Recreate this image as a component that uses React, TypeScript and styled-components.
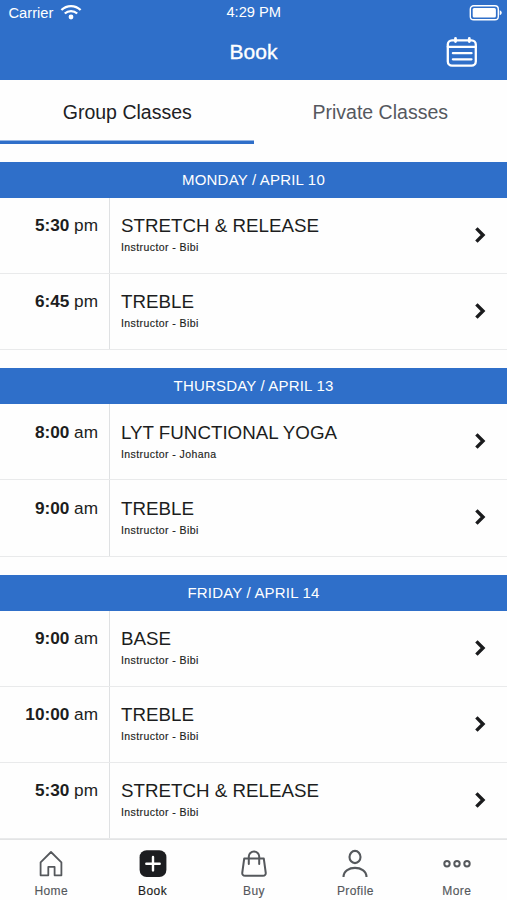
import React from "react";
import styled, { createGlobalStyle } from "styled-components";

const BLUE = "#2f6fc9";

const Global = createGlobalStyle`
  * { box-sizing: border-box; }
  html, body { margin: 0; padding: 0; background: #fff; overflow: hidden; }
  body { font-family: "Liberation Sans", Arial, sans-serif; color: #1c1d20; }
`;

const Screen = styled.div`
  width: 507px;
  height: 900px;
  display: flex;
  flex-direction: column;
  overflow: hidden;
  background: #fefefe;
`;

const Header = styled.header`
  flex: none;
  height: 80.3px;
  background: ${BLUE};
  color: #fff;
`;

const StatusBar = styled.div`
  height: 24px;
  display: grid;
  grid-template-columns: 1fr auto 1fr;
  align-items: center;
  padding: 0 4px 0 8.5px;
  font-size: 14.7px;
  line-height: 24px;
`;

const Carrier = styled.div`
  display: flex;
  align-items: center;
  gap: 7px;
`;

const Clock = styled.div`
  padding-right: 4px;
  height: 25px;
`;

const Battery = styled.div`
  display: flex;
  justify-content: flex-end;
`;

const TitleBar = styled.div`
  display: grid;
  grid-template-columns: 1fr auto 1fr;
  align-items: center;
  height: 56px;
  padding: 0 29px;
`;

const Title = styled.h1`
  grid-column: 2;
  margin: 0;
  font-size: 21px;
  font-weight: 400;
  line-height: 56px;
  -webkit-text-stroke: 0.35px #fff;
`;

const CalendarButton = styled.button`
  justify-self: end;
  display: flex;
  padding: 0;
  border: 0;
  background: none;
`;

const Tabs = styled.div`
  flex: none;
  display: grid;
  grid-template-columns: 1fr 1fr;
  height: 63.6px;
`;

const Tab = styled.div<{ $active?: boolean }>`
  padding-left: ${(p) => (p.$active ? "1px" : "0")};
  text-align: center;
  font-size: 19.5px;
  line-height: 64px;
  height: 63.6px;
  color: ${(p) => (p.$active ? "#202124" : "#55585e")};
  box-shadow: inset 0 -3.5px 0 ${(p) => (p.$active ? BLUE : "transparent")};
`;

const Schedule = styled.main`
  flex: 1;
  min-height: 0;
  overflow: hidden;
`;

const Day = styled.section`
  padding-top: 18px;
`;

const DayTitle = styled.h2`
  margin: 0;
  height: 36px;
  background: ${BLUE};
  color: #fff;
  font-size: 15px;
  font-weight: 400;
  line-height: 36px;
  letter-spacing: 0.18px;
  text-align: center;
`;

const Row = styled.div`
  display: grid;
  grid-template-columns: 110px 1fr 54px;
  height: 76.2px;
  border-bottom: 1px solid #e9eaeb;
`;

const Time = styled.div`
  padding: 17.3px 11px 0 0;
  border-right: 1px solid #dfe1e3;
  text-align: right;
  font-size: 17.2px;
  line-height: 21px;
  white-space: nowrap;
`;

const ClassInfo = styled.div`
  padding: 16.3px 0 0 11px;
`;

const ClassName = styled.div`
  font-size: 18.75px;
  line-height: 23px;
`;

const Instructor = styled.div`
  margin-top: 3px;
  font-size: 10.5px;
  line-height: 14px;
  letter-spacing: 0.42px;
  -webkit-text-stroke: 0.15px #1c1d20;
`;

const Arrow = styled.div`
  display: flex;
  align-items: flex-start;
  padding: 28px 0 0 20.5px;
`;

const Nav = styled.nav`
  flex: none;
  display: grid;
  grid-template-columns: repeat(5, 1fr);
  height: 61px;
  border-top: 1px solid #e3e4e5;
  background: #fefefe;
`;

const NavItem = styled.div<{ $active?: boolean }>`
  display: flex;
  flex-direction: column;
  align-items: center;
  padding: 9px 0 0 1px;
  gap: 4px;
  color: ${(p) => (p.$active ? "#1c1d20" : "#55585c")};
  font-size: 12px;
  line-height: 16px;
  letter-spacing: 0.4px;
  -webkit-text-stroke: 0.15px currentColor;
`;

const WifiIcon = () => (
  <svg width="22" height="17" viewBox="0 0 22 17" fill="none" stroke="#fff" strokeWidth="2.3">
    <path d="M1.4 6C6.8.7 15.2.7 20.6 6" />
    <path d="M4.8 9.5C8.3 6.3 13.7 6.3 17.2 9.5" />
    <circle cx="11" cy="13" r="2.4" fill="#fff" stroke="none" />
  </svg>
);

const BatteryIcon = () => (
  <svg width="34" height="17" viewBox="0 0 34 17" fill="none">
    <rect x="1.3" y="1.8" width="28" height="14" rx="3.4" stroke="#fff" strokeWidth="1.4" />
    <rect x="3.7" y="4.1" width="23.2" height="9.4" rx="1.5" fill="#fff" />
    <path d="M30.7 6.3c2.7.8 2.7 4.2 0 5z" fill="#fff" />
  </svg>
);

const CalendarIcon = () => (
  <svg width="32" height="32" viewBox="0 0 32 32" fill="none" stroke="#fff" strokeWidth="2.3" strokeLinecap="round">
    <rect x="1.8" y="4.3" width="28" height="25.4" rx="4.2" />
    <path d="M1.8 10.8h28M6.9 17.2h18.6M6.9 23.3h18.6" />
    <path d="M9.5 2.4v3.2M23.3 2.4v3.2" strokeWidth="2.8" />
  </svg>
);

const Chevron = () => (
  <svg width="14" height="18" viewBox="0 0 14 18" fill="none" stroke="#1a1b1d" strokeWidth="3.4">
    <path d="M2.4 2.4 9 9l-6.6 6.6" />
  </svg>
);

const HomeIcon = () => (
  <svg width="30" height="30" viewBox="0 0 30 30" fill="none" stroke="currentColor" strokeWidth="1.8" strokeLinejoin="round">
    <path d="M4.6 26.3V13.4L15 3l10.4 10.4v12.9h-6.8v-8.4h-6.3v8.4z" />
  </svg>
);

const BookIcon = () => (
  <svg width="30" height="30" viewBox="0 0 30 30" fill="none">
    <rect x="1.6" y="1.2" width="26.8" height="26.8" rx="7" fill="currentColor" />
    <path d="M15 8v13.4M8.3 14.7h13.4" stroke="#fff" strokeWidth="2.4" strokeLinecap="round" />
  </svg>
);

const BagIcon = () => (
  <svg width="30" height="30" viewBox="0 0 30 30" fill="none" stroke="currentColor" strokeWidth="2" strokeLinecap="round" strokeLinejoin="round">
    <path d="M5.2 9.6h19.6l1.9 13.9c.3 2.1-.8 3.3-2.8 3.3H6.1c-2 0-3.1-1.2-2.8-3.3z" />
    <path d="M9.8 15V7.6a5.2 5.2 0 0 1 10.4 0V15" />
  </svg>
);

const ProfileIcon = () => (
  <svg width="30" height="30" viewBox="0 0 30 30" fill="none" stroke="currentColor" strokeWidth="2.1">
    <ellipse cx="15" cy="8" rx="5.5" ry="6.1" />
    <path d="M3.5 28C3.8 15.8 26.2 15.8 26.5 28" />
  </svg>
);

const MoreIcon = () => (
  <svg width="30" height="30" viewBox="0 0 30 30" fill="none" stroke="currentColor" strokeWidth="2">
    <circle cx="5" cy="14.8" r="2.7" />
    <circle cx="15" cy="14.8" r="2.7" />
    <circle cx="25" cy="14.8" r="2.7" />
  </svg>
);

const days = [
  {
    title: "MONDAY / APRIL 10",
    classes: [
      { time: "5:30", period: "pm", name: "STRETCH & RELEASE", instructor: "Bibi" },
      { time: "6:45", period: "pm", name: "TREBLE", instructor: "Bibi" },
    ],
  },
  {
    title: "THURSDAY / APRIL 13",
    classes: [
      { time: "8:00", period: "am", name: "LYT FUNCTIONAL YOGA", instructor: "Johana" },
      { time: "9:00", period: "am", name: "TREBLE", instructor: "Bibi" },
    ],
  },
  {
    title: "FRIDAY / APRIL 14",
    classes: [
      { time: "9:00", period: "am", name: "BASE", instructor: "Bibi" },
      { time: "10:00", period: "am", name: "TREBLE", instructor: "Bibi" },
      { time: "5:30", period: "pm", name: "STRETCH & RELEASE", instructor: "Bibi" },
    ],
  },
];

const navItems = [
  { label: "Home", Icon: HomeIcon },
  { label: "Book", Icon: BookIcon, active: true },
  { label: "Buy", Icon: BagIcon },
  { label: "Profile", Icon: ProfileIcon },
  { label: "More", Icon: MoreIcon },
];

export default function App() {
  return (
    <Screen>
      <Global />
      <Header>
        <StatusBar>
          <Carrier>
            Carrier
            <WifiIcon />
          </Carrier>
          <Clock>4:29 PM</Clock>
          <Battery>
            <BatteryIcon />
          </Battery>
        </StatusBar>
        <TitleBar>
          <Title>Book</Title>
          <CalendarButton aria-label="Calendar">
            <CalendarIcon />
          </CalendarButton>
        </TitleBar>
      </Header>
      <Tabs>
        <Tab $active>Group Classes</Tab>
        <Tab>Private Classes</Tab>
      </Tabs>
      <Schedule>
        {days.map((day) => (
          <Day key={day.title}>
            <DayTitle>{day.title}</DayTitle>
            {day.classes.map((c) => (
              <Row key={c.time + c.name}>
                <Time>
                  <b>{c.time}</b> {c.period}
                </Time>
                <ClassInfo>
                  <ClassName>{c.name}</ClassName>
                  <Instructor>Instructor - {c.instructor}</Instructor>
                </ClassInfo>
                <Arrow>
                  <Chevron />
                </Arrow>
              </Row>
            ))}
          </Day>
        ))}
      </Schedule>
      <Nav>
        {navItems.map(({ label, Icon, active }) => (
          <NavItem key={label} $active={active}>
            <Icon />
            {label}
          </NavItem>
        ))}
      </Nav>
    </Screen>
  );
}
